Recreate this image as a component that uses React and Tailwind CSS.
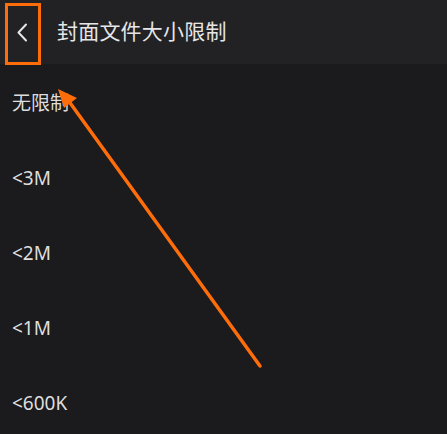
import React from 'react'

const options = ['无限制', '<3M', '<2M', '<1M', '<600K']

export default function App() {
  return (
    <div
      className="relative w-[447px] h-[434px] overflow-hidden bg-[#1b1a1c] text-[#e2e2e2]"
      style={{ fontFamily: '"Noto Sans", "Noto Sans CJK SC", sans-serif' }}
    >
      {/* Header */}
      <header className="h-[64px] bg-[#222124] flex items-center">
        <button className="w-[44px] h-full flex items-center justify-center">
          <svg width="12" height="19" viewBox="0 0 12 19" fill="none">
            <path d="M10 1.5 L2.5 9.5 L10 17.5" stroke="#e6e6e6" strokeWidth="2" strokeLinecap="round" strokeLinejoin="round" />
          </svg>
        </button>
        <h1 className="ml-[13px] text-[21px] tracking-[0.2px] text-[#e6e6e6]">封面文件大小限制</h1>
      </header>

      {/* Options */}
      <ul className="pt-[2px]">
        {options.map((o) => (
          <li key={o} className="h-[75px] flex items-center pl-[12px] text-[19px] text-[#dedede]">
            {o}
          </li>
        ))}
      </ul>

      {/* Annotation overlay */}
      <div className="absolute left-[5px] top-[3px] w-[36px] h-[62px] border-[3px] border-[#ff6d0a]" />
      <svg className="absolute left-0 top-0" width="447" height="434" viewBox="0 0 447 434">
        <line x1="260" y1="366" x2="68" y2="100" stroke="#ff6d0a" strokeWidth="3.5" strokeLinecap="round" />
        <polygon points="58,89 77,98 64,108" fill="#ff6d0a" />
      </svg>
    </div>
  )
}
